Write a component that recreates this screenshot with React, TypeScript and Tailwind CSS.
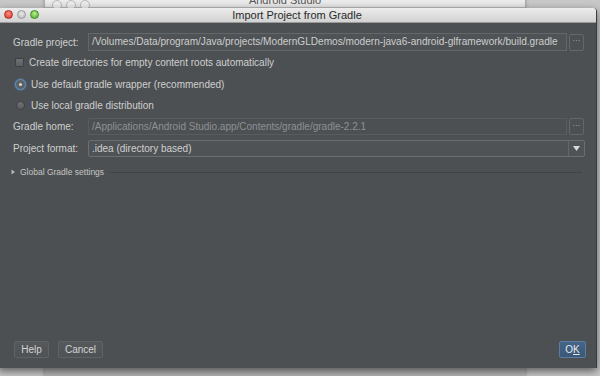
import React from "react";

const font = { fontFamily: '"Liberation Sans", Arial, sans-serif' };

function Ellipsis() {
  return (
    <div className="w-[15px] h-[17px] ml-[2px] border border-[#63676a] rounded-[2px] flex items-center justify-center text-[#bbbbbb] text-[8px] leading-none pb-[2px]">
      ···
    </div>
  );
}

export default function App() {
  return (
    <div className="relative w-[600px] h-[376px] overflow-hidden bg-[#c8c8c8]" style={font}>
      {/* background Android Studio window */}
      <div className="absolute left-[45px] top-[-6px] w-[480px] h-[382px] bg-[#b4b4b4] shadow-[0_1px_4px_rgba(0,0,0,0.35)]">
        <div className="h-[14px] bg-gradient-to-b from-[#f2f2f2] to-[#e4e4e4] border-b border-[#b8b8b8] relative flex items-end justify-center">
          <span className="text-[11px] text-[#555555] leading-none mb-[1px]">Android Studio</span>
          <div className="absolute left-[7px] top-[6px] flex gap-[4px]">
            <div className="w-[10px] h-[10px] rounded-full border border-[#b8b8b8] bg-[#ececec]" />
            <div className="w-[10px] h-[10px] rounded-full border border-[#b8b8b8] bg-[#ececec]" />
            <div className="w-[10px] h-[10px] rounded-full border border-[#b8b8b8] bg-[#ececec]" />
          </div>
        </div>
      </div>

      {/* dialog */}
      <div className="absolute left-[-2px] top-[8px] w-[599px] h-[360px] flex flex-col rounded-t-[4px] overflow-hidden shadow-[0_3px_8px_rgba(0,0,0,0.55)] border-r border-[#3a3d3f]">
        <div className="h-[15px] shrink-0 bg-gradient-to-b from-[#ececec] to-[#d2d2d2] border-b border-[#9a9a9a] relative flex items-center justify-center">
          <span className="text-[11px] text-[#2a2a2a] leading-none">Import Project from Gradle</span>
          <div className="absolute left-[6px] top-[2px] flex gap-[4px]">
            <div className="w-[9px] h-[9px] rounded-full bg-[radial-gradient(circle_at_50%_35%,#ff8a80,#d8322a)] border border-[#a8312a]" />
            <div className="w-[9px] h-[9px] rounded-full bg-[radial-gradient(circle_at_50%_35%,#e8e8e8,#b8b8b8)] border border-[#9a9a9a]" />
            <div className="w-[9px] h-[9px] rounded-full bg-[radial-gradient(circle_at_50%_35%,#b6f08a,#4fa82a)] border border-[#3f8a22]" />
          </div>
        </div>

        <div className="flex-1 bg-[#4c5052] flex flex-col pl-[15px] pr-[12px] text-[10px] text-[#cfcfcf]">
          {/* Gradle project */}
          <div className="flex items-center mt-[10px] h-[18px]">
            <span className="w-[75px] shrink-0">Gradle project:</span>
            <div className="flex-1 h-[18px] border border-[#63676a] bg-[#4f5356] flex items-center px-[3px] text-[#cdcdcd] whitespace-nowrap overflow-hidden text-[10.1px]">
              /Volumes/Data/program/Java/projects/ModernGLDemos/modern-java6-android-glframework/build.gradle
            </div>
            <Ellipsis />
          </div>

          {/* checkbox */}
          <div className="flex items-center mt-[6px] h-[11px] pl-[2px]">
            <div className="w-[9px] h-[9px] rounded-[1px] bg-gradient-to-b from-[#6e7275] to-[#5a5e61] border border-[#3e4143]" />
            <span className="ml-[5px]">Create directories for empty content roots automatically</span>
          </div>

          {/* radio 1 */}
          <div className="flex items-center mt-[10px] h-[12px] pl-[2px]">
            <div className="w-[11px] h-[11px] rounded-full bg-[#5e6265] border-[1.5px] border-[#5b8fc7] shadow-[0_0_2px_#5b8fc7] flex items-center justify-center">
              <div className="w-[3px] h-[3px] rounded-full bg-[#d8d8d8]" />
            </div>
            <span className="ml-[5px]">Use default gradle wrapper (recommended)</span>
          </div>

          {/* radio 2 */}
          <div className="flex items-center mt-[9px] h-[12px] pl-[3px]">
            <div className="w-[9px] h-[9px] rounded-full bg-gradient-to-b from-[#6e7275] to-[#5a5e61] border border-[#3e4143]" />
            <span className="ml-[6px]">Use local gradle distribution</span>
          </div>

          {/* Gradle home */}
          <div className="flex items-center mt-[7px] h-[17px]">
            <span className="w-[75px] shrink-0">Gradle home:</span>
            <div className="flex-1 h-[17px] border border-[#585c5f] bg-[#4c5052] flex items-center px-[3px] text-[#8c9092] whitespace-nowrap overflow-hidden">
              /Applications/Android Studio.app/Contents/gradle/gradle-2.2.1
            </div>
            <Ellipsis />
          </div>

          {/* Project format */}
          <div className="flex items-center mt-[5px] h-[17px]">
            <span className="w-[75px] shrink-0">Project format:</span>
            <div className="flex-1 h-[17px] border border-[#6a6e71] rounded-[2px] bg-[#4f5356] flex items-center mr-[-1px]">
              <span className="flex-1 px-[3px] text-[#d0d0d0]">.idea (directory based)</span>
              <div className="w-[16px] h-full border-l border-[#63676a] flex items-center justify-center">
                <svg width="7" height="5" viewBox="0 0 7 5">
                  <path d="M0 0 H7 L3.5 5 Z" fill="#d8d8d8" />
                </svg>
              </div>
            </div>
          </div>

          {/* Global Gradle settings */}
          <div className="flex items-center mt-[9px] h-[12px]">
            <svg width="5" height="6" viewBox="0 0 5 6" className="ml-[-2px]">
              <path d="M0.5 0.5 L4 3 L0.5 5.5 Z" fill="#b8b8b8" />
            </svg>
            <span className="ml-[4px] text-[8.5px] text-[#c4c4c4]">Global Gradle settings</span>
            <div className="flex-1 h-px bg-[#404345] ml-[6px] mr-[2px]" />
          </div>

          <div className="flex-1" />

          {/* buttons */}
          <div className="flex items-center mb-[10px] h-[17px]">
            <div className="w-[35px] h-[17px] border border-[#5f6366] rounded-[2px] bg-gradient-to-b from-[#55595c] to-[#4e5254] flex items-center justify-center text-[#d4d4d4] ml-[1px]">
              Help
            </div>
            <div className="w-[45px] h-[17px] border border-[#5f6366] rounded-[2px] bg-gradient-to-b from-[#55595c] to-[#4e5254] flex items-center justify-center text-[#d4d4d4] ml-[9px]">
              Cancel
            </div>
            <div className="flex-1" />
            <div className="w-[27px] h-[17px] border border-[#5a7da3] rounded-[2px] bg-gradient-to-b from-[#456588] to-[#3a5878] flex items-center justify-center text-[#e8e8e8] mr-[-2px]">
              O<span className="underline">K</span>
            </div>
          </div>
        </div>
      </div>
    </div>
  );
}
